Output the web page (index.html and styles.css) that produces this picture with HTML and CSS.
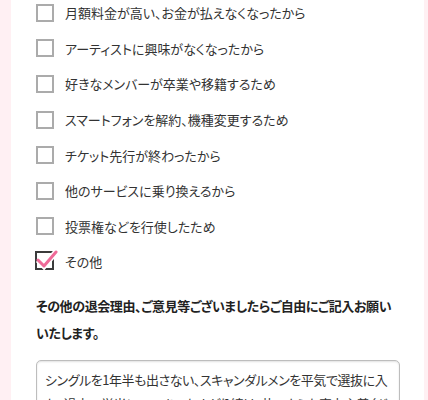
FILE: index.html
```html
<!DOCTYPE html>
<html lang="ja">
<head>
<meta charset="UTF-8" />
<meta name="viewport" content="width=device-width, initial-scale=1" />
<title>退会理由</title>
<link rel="stylesheet" href="styles.css">
</head>
<body>

<div class="page">
  <div class="content">
    <ul class="reasons">
      <li><span class="box"></span>月額料金が高い、お金が払えなくなったから</li>
      <li><span class="box"></span>アーティストに興味がなくなったから</li>
      <li><span class="box"></span>好きなメンバーが卒業や移籍するため</li>
      <li><span class="box"></span>スマートフォンを解約、機種変更するため</li>
      <li><span class="box"></span>チケット先行が終わったから</li>
      <li><span class="box"></span>他のサービスに乗り換えるから</li>
      <li><span class="box"></span>投票権などを行使したため</li>
      <li class="checked">
        <svg class="check" width="24" height="24" viewBox="0 0 24 24">
          <rect x="2" y="4" width="17" height="17" fill="none" stroke="#3b3b3b" stroke-width="2" />
          <path d="M4 12 L10 18 L22 4" fill="none" stroke="#fff" stroke-width="6" />
          <path d="M4 12 L10 18 L22 4" fill="none" stroke="#ef6a98" stroke-width="3" stroke-linecap="round" stroke-linejoin="round" />
        </svg>その他
      </li>
    </ul>

    <p class="note">その他の退会理由、ご意見等ございましたらご自由にご記入お願いいたします。</p>

    <div class="comment">シングルを1年半も出さない、スキャンダルメンを平気で選抜に入れ、過去の栄光にいつまでもすがり続け、昔のような実力主義（ガチ）の運営に戻ってほしいです。</div>
  </div>
</div>

</body>
</html>
```

FILE: styles.css
```css
body {
  margin: 0; background: #fff0f3; color: #333;
  font-family: "Noto Sans CJK JP", "Noto Sans", sans-serif;
  font-feature-settings: "palt";
  overflow: hidden;
}
.page {
  margin-left: 11px; width: 413px; height: 400px;
  background: #fff;
}
.content {
  padding: 0 24px 0 25px;
}
.reasons {
  list-style: none; margin: 0; padding: 0;
  position: relative; top: -5px;
}
.reasons li {
  display: flex; align-items: center; gap: 11px;
  height: 35.6px; font-size: 13px;
}
.box {
  width: 14px; height: 14px; flex: none;
  border: 2px solid #ababab; background: #fff;
}
.reasons .checked { gap: 7px; }
.check {
  margin-left: -2px; margin-top: -3px; flex: none;
}
.note {
  margin: 7px 0 0; font-size: 13px; font-weight: bold; color: #222;
  line-height: 27px; letter-spacing: -0.4px;
}
.comment {
  margin-top: 14px;
  border: 1px solid #bdbdbd; border-radius: 5px;
  box-shadow: inset 0 1px 2px rgba(0,0,0,0.12);
  padding: 7px 4px 5px 8px; font-size: 13px; line-height: 24px; color: #333;
  letter-spacing: -0.45px;
  height: 120px; overflow: hidden;
}
```
